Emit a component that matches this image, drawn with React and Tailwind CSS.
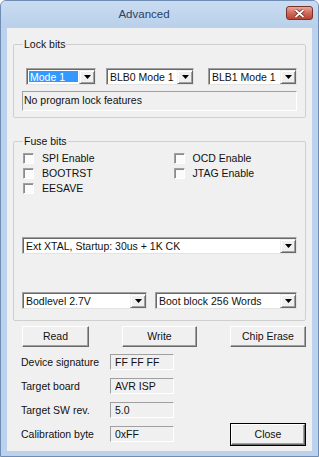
import React from "react";

function Arrow() {
  return (
    <svg width="7" height="4" viewBox="0 0 7 4">
      <path d="M0 0h7L3.5 4z" fill="#000" />
    </svg>
  );
}

function Combo({ text, className, selected }) {
  return (
    <div
      className={
        "flex h-[17px] bg-white border border-t-[#a0a0a0] border-l-[#a0a0a0] border-r-[#e3e3e3] border-b-[#e3e3e3] shadow-[inset_1px_1px_0_#696969] " +
        className
      }
    >
      <div className="flex-1 flex items-stretch pl-[2px] py-[2px] pr-[1px] overflow-hidden whitespace-nowrap leading-[13px]">
        {selected ? (
          <span className="flex-1 bg-[#3399ff] text-white pl-[1px]">{text}</span>
        ) : (
          <span className="pl-[1px]">{text}</span>
        )}
      </div>
      <div className="w-[16px] mt-[1px] flex items-center justify-center bg-[#f0f0f0] border border-t-[#f0f0f0] border-l-[#f0f0f0] border-r-[#696969] border-b-[#696969] shadow-[inset_1px_1px_0_#fff,inset_-1px_-1px_0_#a0a0a0]">
        <Arrow />
      </div>
    </div>
  );
}

function Check({ label }) {
  return (
    <div className="flex items-center h-[15px]">
      <span className="w-[11px] h-[11px] bg-[#fbfbfb] border border-t-[#a0a0a0] border-l-[#a0a0a0] border-r-white border-b-white shadow-[inset_1px_1px_0_#8a8a8a]" />
      <span className="ml-[8px] leading-[13px]">{label}</span>
    </div>
  );
}

function Button({ children, className }) {
  return (
    <div
      className={
        "flex items-center justify-center h-[21px] bg-[#f0f0f0] border border-t-white border-l-white border-r-[#696969] border-b-[#696969] shadow-[inset_-1px_-1px_0_#a0a0a0] " +
        className
      }
    >
      {children}
    </div>
  );
}

function Field({ label, value }) {
  return (
    <div className="flex items-center h-[16px]">
      <span className="w-[89px] leading-[13px]">{label}</span>
      <div className="w-[64px] h-[16px] flex items-center pl-[4px] bg-[#f0f0f0] border border-t-[#a0a0a0] border-l-[#a0a0a0] border-r-white border-b-white leading-[13px]">
        {value}
      </div>
    </div>
  );
}

export default function App() {
  return (
    <div className="w-[319px] h-[457px] flex flex-col bg-[#bcd2ec] border border-[#6f8db4] rounded-t-[6px] text-[10.5px] text-[#111] font-['Liberation_Sans',Arial,sans-serif] overflow-hidden">
      {/* title bar */}
      <div className="relative h-[27px] flex items-center bg-gradient-to-b from-[#c9dcf1] to-[#b9d0ea]">
        <div className="w-[286px] text-center text-[11.5px] text-[#2a4263] pt-[1px]">Advanced</div>
        <div className="absolute right-[5px] top-[5px] w-[27px] h-[14px] rounded-[3px] border border-[#7a3128] bg-gradient-to-b from-[#e6a89c] via-[#cf6a5b] to-[#b94234] flex items-center justify-center">
          <svg width="11" height="9" viewBox="0 0 11 9">
            <path d="M1.5 1l8 7M9.5 1l-8 7" stroke="#5a1d15" strokeWidth="3.2" />
            <path d="M1.5 1l8 7M9.5 1l-8 7" stroke="#fff" strokeWidth="1.8" />
          </svg>
        </div>
      </div>

      {/* client area */}
      <div className="mx-[6px] h-[423px] bg-[#f0f0f0] flex flex-col">
        <fieldset className="mx-[6px] mt-[10px] border border-[#cfcfcf] rounded-[2px] px-[8px] pb-[6px]">
          <legend className="ml-[1px] px-[1px] leading-[13px]">Lock bits</legend>
          <div className="flex pl-[4px] mt-[17px]">
            <Combo text="Mode 1" selected className="w-[70px]" />
            <Combo text="BLB0 Mode 1" className="w-[88px] ml-[10px]" />
            <Combo text="BLB1 Mode 1" className="w-[89px] ml-[14px]" />
          </div>
          <div className="mt-[6px] h-[20px] flex items-center pl-[1px] border border-t-[#a0a0a0] border-l-[#a0a0a0] border-r-white border-b-white">
            No program lock features
          </div>
        </fieldset>

        <fieldset className="mx-[6px] mt-[17px] border border-[#cfcfcf] rounded-[2px] px-[8px] pb-[11px]">
          <legend className="ml-[1px] px-[1px] leading-[13px]">Fuse bits</legend>
          <div className="grid grid-cols-2 pl-[1px] mt-[3px] w-[260px]">
            <div className="flex flex-col">
              <Check label="SPI Enable" />
              <Check label="BOOTRST" />
              <Check label="EESAVE" />
            </div>
            <div className="flex flex-col pl-[21px]">
              <Check label="OCD Enable" />
              <Check label="JTAG Enable" />
            </div>
          </div>
          <Combo text="Ext XTAL, Startup: 30us + 1K CK" className="w-[275px] mt-[41px]" />
          <div className="flex mt-[38px]">
            <Combo text="Bodlevel 2.7V" className="w-[125px]" />
            <Combo text="Boot block 256 Words" className="w-[142px] ml-[8px]" />
          </div>
        </fieldset>

        <div className="flex mt-[5px] pl-[15px]">
          <Button className="w-[67px]">Read</Button>
          <Button className="w-[75px] ml-[33px]">Write</Button>
          <Button className="w-[76px] ml-[33px]">Chip Erase</Button>
        </div>

        <div className="flex items-end mt-[7px]">
          <div className="flex flex-col gap-[8px] pl-[14px] pb-[4px]">
            <Field label="Device signature" value="FF FF FF" />
            <Field label="Target board" value="AVR ISP" />
            <Field label="Target SW rev." value="5.0" />
            <Field label="Calibration byte" value="0xFF" />
          </div>
          <div className="ml-[56px] w-[76px] h-[23px] border border-black">
            <Button className="w-full h-full">Close</Button>
          </div>
        </div>
      </div>
    </div>
  );
}
